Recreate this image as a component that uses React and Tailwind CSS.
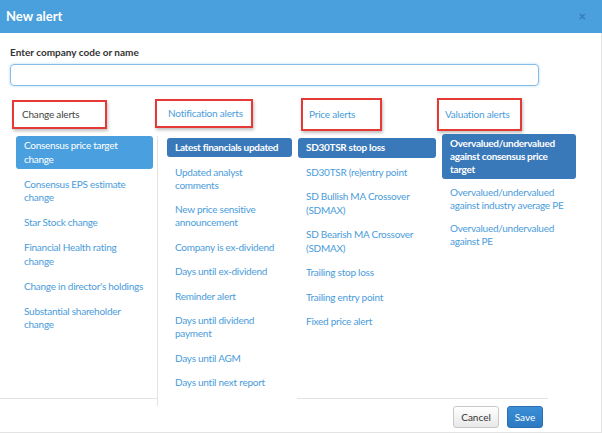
import React from "react";

const F = { fontFamily: "Lato, 'Open Sans', sans-serif" };

function Item({ children, sel, dark, lh = "leading-[13.5px]" }) {
  if (sel) {
    return (
      <div
        className={`rounded-[3px] px-2 py-[3px] text-[10px] ${lh} tracking-[-0.3px] text-white ${
          dark ? "bg-[#3a79b9] font-bold" : "bg-[#4aa0de] font-normal"
        }`}
      >
        {children}
      </div>
    );
  }
  return (
    <div className={`px-2 py-[3px] text-[10px] ${lh} tracking-[-0.25px] text-[#4a9cdb]`}>{children}</div>
  );
}

function Header({ children, gray, cls }) {
  return (
    <div
      className={`h-[29px] border-2 border-[#e53935] flex items-center text-[10px] tracking-[-0.2px] shadow-[1px_2px_3px_rgba(0,0,0,0.25)] ${
        gray ? "text-[#444]" : "text-[#4a9cdb]"
      } ${cls}`}
    >
      {children}
    </div>
  );
}

export default function App() {
  const l2 = "leading-[13px]";
  return (
    <div style={F} className="w-[602px] h-[433px] bg-white overflow-hidden flex flex-col">
      <div className="h-[33px] bg-[#4a9fdd] flex items-center justify-between pl-[6px] pr-[16px] shrink-0">
        <span className="text-white font-bold text-[13px]">New alert</span>
        <span className="text-[#2e6da4] text-[13px] font-bold opacity-70">×</span>
      </div>
      <div className="flex-1 flex flex-col border-r border-[#e3e3e3] border-b">
        <div className="pl-[10px] pt-[13px] text-[10px] font-bold text-[#333] leading-[12px]">
          Enter company code or name
        </div>
        <div className="pl-[10px] pt-[6px]">
          <div className="w-[529px] h-[22px] border border-[#86bde8] rounded-[4px] shadow-[0_0_3px_rgba(74,159,221,0.4)]" />
        </div>
        <div className="flex pl-[12px] pt-[13px] h-[312px]">
          {/* col1 */}
          <div className="w-[145px] flex flex-col">
            <Header gray cls="w-[95px] pl-[8px] mt-[1px]">Change alerts</Header>
            <div className="pl-[4px] pr-[4px] mt-[7px] flex flex-col gap-[5.5px]">
              <Item sel>Consensus price target change</Item>
              <Item>Consensus EPS estimate change</Item>
              <Item>Star Stock change</Item>
              <Item>Financial Health rating change</Item>
              <Item>Change in director's holdings</Item>
              <Item>Substantial shareholder change</Item>
            </div>
          </div>
          {/* col2 */}
          <div className="w-[140px] flex flex-col relative z-10">
            <Header cls="w-[98px] -ml-[2px] pl-[11px]">Notification alerts</Header>
            <div className="mt-[8px] border-l border-[#e3e3e3] bg-white flex-1 -mb-[8px] pl-[9px] pt-[2px] pr-[5px] flex flex-col gap-[5.5px]">
              <Item sel dark lh={l2}>Latest financials updated</Item>
              <Item lh={l2}>Updated analyst comments</Item>
              <Item lh={l2}>New price sensitive announcement</Item>
              <Item lh={l2}>Company is ex-dividend</Item>
              <Item lh={l2}>Days until ex-dividend</Item>
              <Item lh={l2}>Reminder alert</Item>
              <Item lh={l2}>Days until dividend payment</Item>
              <Item lh={l2}>Days until AGM</Item>
              <Item lh={l2}>Days until next report</Item>
            </div>
          </div>
          {/* col3 */}
          <div className="w-[142px] flex flex-col">
            <Header cls="w-[81px] ml-[4px] pl-[6px] -mt-[1px] h-[33px]">Price alerts</Header>
            <div className="pl-[1px] pr-[3px] mt-[7px] flex flex-col gap-[5px]">
              <Item sel dark>SD30TSR stop loss</Item>
              <Item>SD30TSR (re)entry point</Item>
              <Item>SD Bullish MA Crossover (SDMAX)</Item>
              <Item>SD Bearish MA Crossover (SDMAX)</Item>
              <Item>Trailing stop loss</Item>
              <Item>Trailing entry point</Item>
              <Item>Fixed price alert</Item>
            </div>
          </div>
          {/* col4 */}
          <div className="w-[142px] flex flex-col">
            <Header cls="w-[85px] -ml-[2px] pl-[6px] -mt-[1px] h-[33px]">Valuation alerts</Header>
            <div className="pl-[3px] pr-[5px] mt-[3px] flex flex-col gap-[4px]">
              <Item sel dark lh={l2}>Overvalued/undervalued against consensus price target</Item>
              <Item lh={l2}>Overvalued/undervalued against industry average PE</Item>
              <Item lh={l2}>Overvalued/undervalued against PE</Item>
            </div>
          </div>
        </div>
        <div className="w-[548px] border-t border-[#e3e3e3] flex justify-end gap-[8px] pt-[7px] pr-[5px]">
          <button className="h-[22px] w-[46px] rounded-[3px] border border-[#c8c8c8] bg-gradient-to-b from-white to-[#e8e8e8] text-[10px] text-[#333]">
            Cancel
          </button>
          <button className="h-[22px] w-[36px] rounded-[3px] border border-[#2a6fb0] bg-gradient-to-b from-[#3a8fd6] to-[#2b79c2] text-[10px] text-white">
            Save
          </button>
        </div>
      </div>
    </div>
  );
}
